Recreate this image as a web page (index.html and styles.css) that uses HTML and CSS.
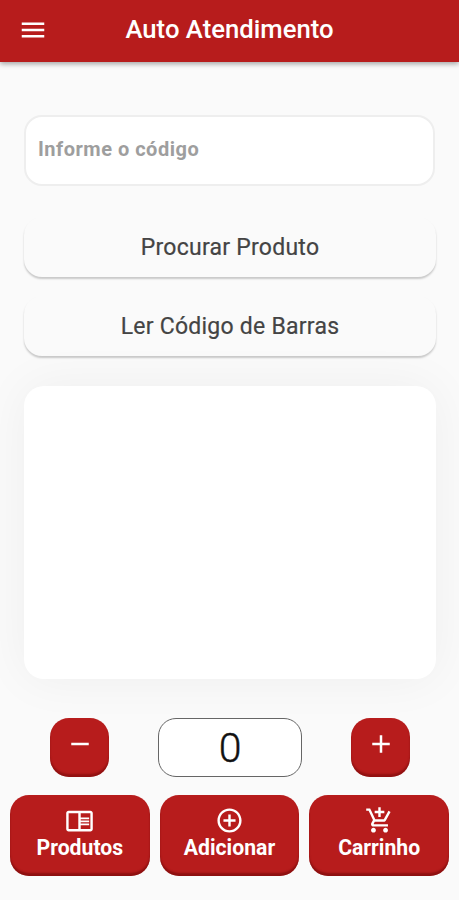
FILE: index.html
```
<!DOCTYPE html>
<html lang="pt-BR">
<head>
    <meta charset="UTF-8">
    <meta name="viewport" content="width=device-width, initial-scale=1.0">
    <title>Auto Atendimento</title>
    <link rel="stylesheet" href="styles.css">
</head>
<body>
    <header class="topbar">
        <button class="menu" aria-label="Menu">
            <svg class="icon" viewBox="0 0 24 24"><path d="M3 18h18v-2H3v2zm0-5h18v-2H3v2zm0-7v2h18V6H3z"/></svg>
        </button>
        <h1>Auto Atendimento</h1>
    </header>

    <main>
        <input class="code" type="text" placeholder="Informe o código">
        <button class="btn-light"><span>Procurar Produto</span></button>
        <button class="btn-light"><span>Ler Código de Barras</span></button>
        <div class="product"></div>
        <div class="quantity">
            <button class="step" aria-label="Diminuir">
                <svg class="icon" viewBox="0 0 24 24"><path d="M19 13H5v-2h14v2z"/></svg>
            </button>
            <div class="amount"><span>0</span></div>
            <button class="step" aria-label="Aumentar">
                <svg class="icon" viewBox="0 0 24 24"><path d="M19 13h-6v6h-2v-6H5v-2h6V5h2v6h6v2z"/></svg>
            </button>
        </div>
    </main>

    <footer class="actions">
        <button class="action">
            <svg class="icon" viewBox="0 0 24 24"><path d="M13 12h7v1.500h-7zm0-2.500h7V11h-7zm0 5h7V16h-7zM21 4H3c-1.100 0-2 .9-2 2v13c0 1.100.9 2 2 2h18c1.100 0 2-.9 2-2V6c0-1.100-.9-2-2-2zM11 19H3V6h8v13zm10 0h-8V6h8v13z"/></svg>
            <span>Produtos</span>
        </button>
        <button class="action">
            <svg class="icon" viewBox="0 0 24 24"><path d="M13 7h-2v4H7v2h4v4h2v-4h4v-2h-4V7zm-1-5C6.480 2 2 6.480 2 12s4.480 10 10 10 10-4.480 10-10S17.520 2 12 2zm0 18c-4.410 0-8-3.590-8-8s3.590-8 8-8 8 3.590 8 8-3.590 8-8 8z"/></svg>
            <span>Adicionar</span>
        </button>
        <button class="action">
            <svg class="icon" viewBox="0 0 24 24"><path d="M11 9h2V6h3V4h-3V1h-2v3H8v2h3v3zm-4 9c-1.100 0-1.990.9-1.990 2S5.900 22 7 22s2-.9 2-2-.9-2-2-2zm10 0c-1.100 0-1.990.9-1.990 2s.89 2 1.990 2 2-.9 2-2-.9-2-2-2zm-9.830-3.250l.03-.12.900-1.630h7.450c.75 0 1.410-.41 1.750-1.030l3.860-7.010L19.420 4h-.01l-1.100 2-2.760 5H8.530l-.13-.27L6.160 6l-.95-2-.94-2H1v2h2l3.600 7.590-1.350 2.450c-.16.28-.25.61-.25.96 0 1.100.9 2 2 2h12v-2H7.420c-.13 0-.25-.11-.25-.25z"/></svg>
            <span>Carrinho</span>
        </button>
    </footer>
</body>
</html>
```
FILE: styles.css
```
* {
    box-sizing: border-box;
}

body {
    margin: 0;
    height: 900px;
    overflow: hidden;
    font-family: Roboto, sans-serif;
    background-color: #fafafa;
}

button {
    border: none;
    padding: 0;
    font-family: inherit;
    cursor: pointer;
}

.icon {
    display: block;
    width: 30px;
    height: 30px;
    fill: currentColor;
}

.topbar {
    display: grid;
    grid-template-columns: 66px 1fr 66px;
    align-items: center;
    height: 62px;
    padding-bottom: 2px;
    background-color: #b71c1c;
    color: #fff;
    box-shadow: 0 2px 5px rgba(0, 0, 0, 0.35);
}

.menu {
    justify-self: center;
    background: none;
    color: #fff;
}

h1 {
    margin: 0;
    padding-bottom: 2px;
    text-align: center;
    font-size: 25.700px;
    font-weight: 500;
    line-height: 30px;
}

main {
    padding: 53px 23px 0 24px;
}

.code {
    display: block;
    width: 411px;
    height: 71px;
    margin-bottom: 31px;
    padding: 0 12px 3px;
    border: 2px solid #eee;
    border-radius: 18px;
    background-color: #fff;
    font-family: inherit;
    font-size: 20px;
    font-weight: 700;
    letter-spacing: 0.500px;
}

.code::placeholder {
    color: #9e9e9e;
}

.btn-light {
    display: block;
    width: 100%;
    height: 60px;
    margin-bottom: 19px;
    padding-top: 1px;
    border-radius: 18px;
    background-color: #fafafa;
    color: #444;
    font-size: 23px;
    letter-spacing: 0.250px;
    -webkit-text-stroke: 0.200px #444;
    box-shadow: 0 2px 2px rgba(0, 0, 0, 0.2);
}

.product {
    height: 293px;
    margin-top: 30px;
    border-radius: 20px;
    background-color: #fff;
    box-shadow: 0 0 50px rgba(0, 0, 0, 0.05);
}

.quantity {
    display: flex;
    justify-content: space-between;
    margin-top: 39px;
    padding: 0 26px;
}

.step {
    display: flex;
    justify-content: center;
    width: 59px;
    height: 59px;
    padding-top: 11px;
    border-radius: 19px;
    background-color: #b71c1c;
    color: #fff;
    box-shadow: inset 0 -3px 2px rgba(90, 0, 0, 0.4);
}

.amount {
    display: flex;
    justify-content: center;
    align-items: center;
    width: 144px;
    height: 59px;
    border: 1px solid #666;
    border-radius: 18px;
    background-color: #fff;
    color: #111;
    font-size: 41px;
    font-weight: 300;
    -webkit-text-stroke: 0.400px #111;
}

.actions {
    display: grid;
    grid-template-columns: repeat(3, 1fr);
    gap: 10px;
    margin-top: 18px;
    padding: 0 10px;
}

.action {
    display: flex;
    flex-direction: column;
    align-items: center;
    height: 81px;
    padding-top: 11px;
    border-radius: 19px;
    background-color: #b71c1c;
    color: #fff;
    font-size: 21.200px;
    font-weight: 700;
    line-height: 26px;
    box-shadow: inset 0 -3px 2px rgba(90, 0, 0, 0.45);
}

.action .icon {
    width: 29px;
    height: 29px;
}
```
